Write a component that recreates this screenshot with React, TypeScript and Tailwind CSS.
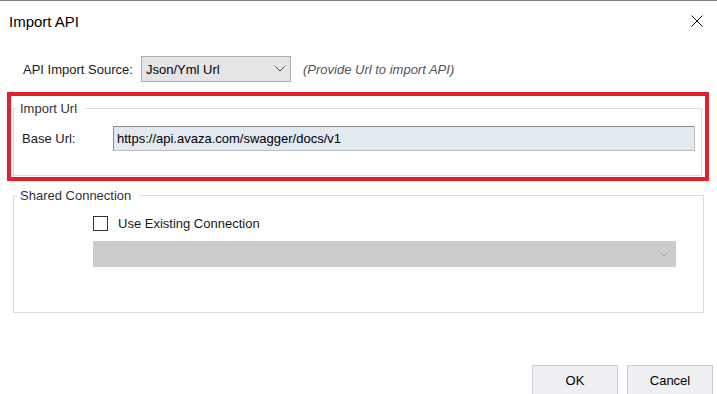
import React from "react";

const font = { fontFamily: '"Liberation Sans", Arial, sans-serif' };

function Chevron({ color }: { color: string }) {
  return (
    <svg width="10" height="6" viewBox="0 0 10 6" fill="none">
      <path d="M0.5 0.5 L5 5 L9.5 0.5" stroke={color} strokeWidth="1" />
    </svg>
  );
}

export default function App() {
  return (
    <div
      className="w-[717px] h-[394px] overflow-hidden bg-white border-t border-[#7f7f7f] text-[13px] leading-[15px] text-[#1a1a1a]"
      style={font}
    >
      {/* title bar */}
      <div className="h-[40px] flex items-center justify-between pl-[9px] pr-[14px]">
        <span className="text-[15px] leading-[17px] text-black">Import API</span>
        <svg width="12" height="12" viewBox="0 0 12 12" fill="none">
          <path d="M0.5 0.5 L11.5 11.5 M11.5 0.5 L0.5 11.5" stroke="#111" strokeWidth="1" />
        </svg>
      </div>

      {/* import source */}
      <div className="mt-[15px] flex items-center pl-[23px] h-[26px]">
        <span className="w-[118px]">API Import Source:</span>
        <div className="w-[150px] h-[26px] flex items-center justify-between pl-[4px] pr-[5px] bg-[#e5e5e5] border border-[#adadad]">
          <span className="text-black">Json/Yml Url</span>
          <Chevron color="#444" />
        </div>
        <span className="ml-[12px] italic text-[#555]">(Provide Url to import API)</span>
      </div>

      {/* highlighted import url group */}
      <div className="mt-[10px] ml-[7px] w-[702px] border-4 border-[#e3202a] pl-[2px] pr-[3px] pt-[5px] pb-[1px]">
        <fieldset className="border border-[#dcdcdc]">
          <legend className="ml-[3px] pl-[3px] pr-[8px] text-[#333]">Import Url</legend>
          <div className="mt-[10px] mb-[24px] flex items-center pl-[8px] pr-[6px]">
            <span className="w-[91px]">Base Url:</span>
            <div className="flex-1 h-[25px] flex items-center pl-[3px] bg-[#e2e9f0] border border-[#bdbdbd] border-t-[#8a8a8a] border-l-[#8a8a8a]">
              <span className="text-black">https://api.avaza.com/swagger/docs/v1</span>
            </div>
          </div>
        </fieldset>
      </div>

      {/* shared connection */}
      <fieldset className="mt-[7px] ml-[13px] w-[691px] border border-[#dcdcdc]">
        <legend className="ml-[3px] pl-[3px] pr-[8px] text-[#333]">Shared Connection</legend>
        <div className="pl-[79px] pr-[27px] pt-[12px] pb-[45px] flex flex-col">
          <label className="flex items-center h-[16px] gap-[10px]">
            <span className="w-[15px] h-[15px] border border-[#333] bg-white" />
            <span>Use Existing Connection</span>
          </label>
          <div className="mt-[10px] h-[26px] flex items-center justify-end pr-[7px] bg-[#cccccc]">
            <Chevron color="#a8a8a8" />
          </div>
        </div>
      </fieldset>

      {/* buttons */}
      <div className="mt-[52px] flex justify-end gap-[9px] pr-[4px]">
        <button className="w-[86px] h-[30px] bg-[#eef0f3] border border-[#c9ccd0] text-black">OK</button>
        <button className="w-[86px] h-[30px] bg-[#eef0f3] border border-[#c9ccd0] text-black">Cancel</button>
      </div>
    </div>
  );
}
